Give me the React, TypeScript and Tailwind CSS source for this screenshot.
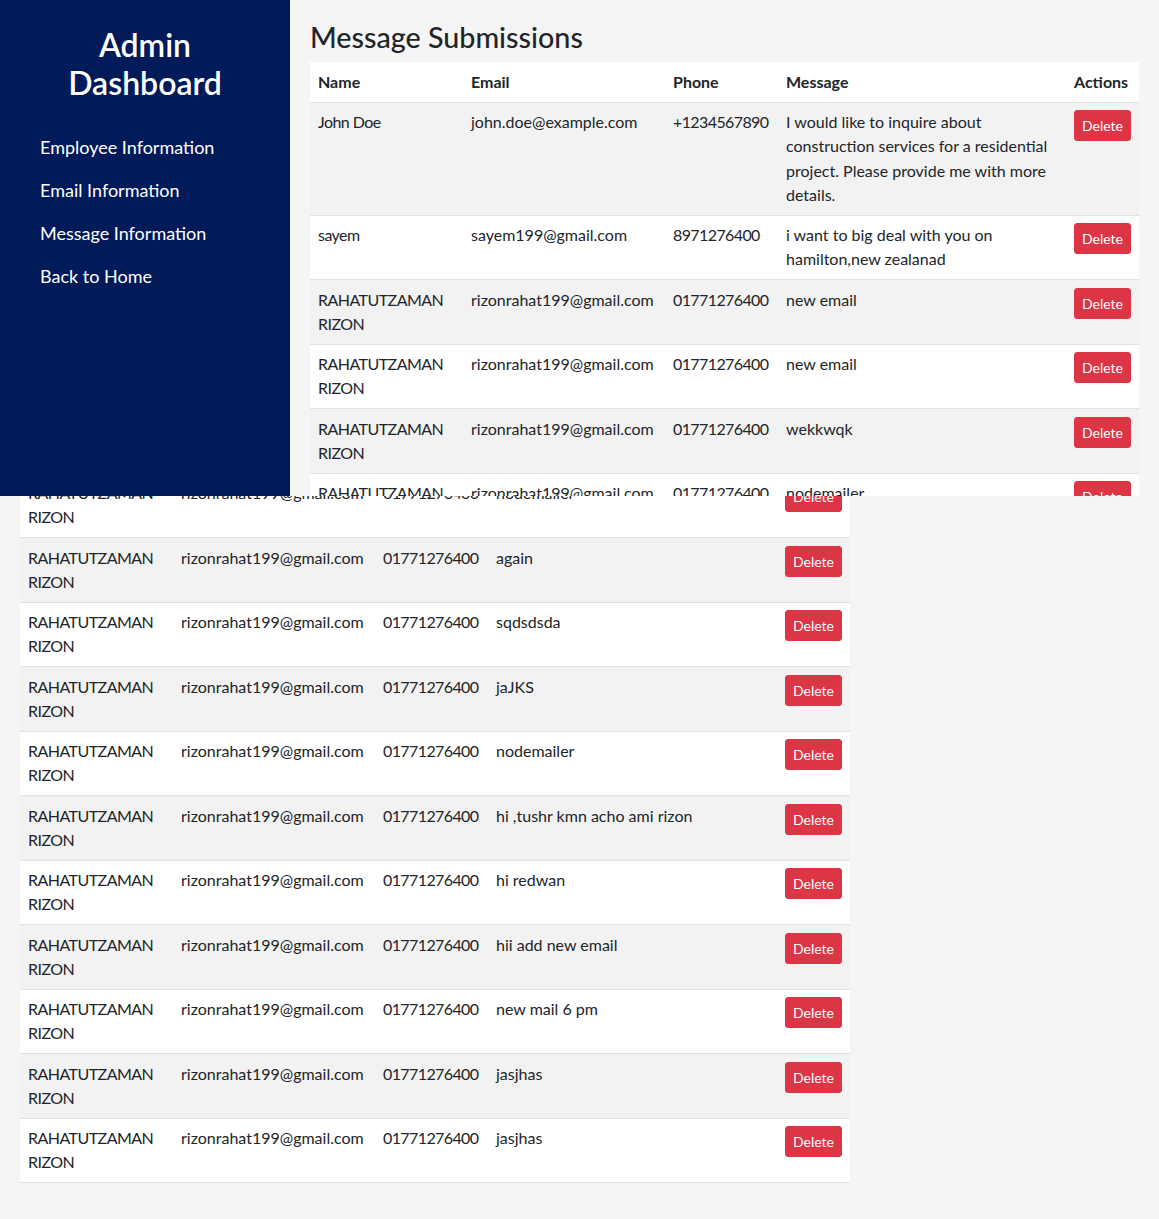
import React from "react";

type Row = { name: string; email: string; phone: string; message: string };

const R = "RAHATUTZAMAN RIZON";
const E = "rizonrahat199@gmail.com";
const P = "01771276400";

const rows: Row[] = [
  {
    name: "John Doe",
    email: "john.doe@example.com",
    phone: "+1234567890",
    message:
      "I would like to inquire about construction services for a residential project. Please provide me with more details.",
  },
  { name: "sayem", email: "sayem199@gmail.com", phone: "8971276400", message: "i want to big deal with you on hamilton,new zealanad" },
  { name: R, email: E, phone: P, message: "new email" },
  { name: R, email: E, phone: P, message: "new email" },
  { name: R, email: E, phone: P, message: "wekkwqk" },
  { name: R, email: E, phone: P, message: "nodemailer" },
  { name: R, email: E, phone: P, message: "again" },
  { name: R, email: E, phone: P, message: "sqdsdsda" },
  { name: R, email: E, phone: P, message: "jaJKS" },
  { name: R, email: E, phone: P, message: "nodemailer" },
  { name: R, email: E, phone: P, message: "hi ,tushr kmn acho ami rizon" },
  { name: R, email: E, phone: P, message: "hi redwan" },
  { name: R, email: E, phone: P, message: "hii add new email" },
  { name: R, email: E, phone: P, message: "new mail 6 pm" },
  { name: R, email: E, phone: P, message: "jasjhas" },
  { name: R, email: E, phone: P, message: "jasjhas" },
];

function MainContent() {
  return (
    <div className="p-5">
      <h2 className="mb-2 text-[28.7px] font-medium leading-[1.2] text-[#212529]">Message Submissions</h2>
      <table className="mb-4 w-full table-fixed border-collapse bg-white text-[16px] leading-[24.25px] text-[#212529]">
        <colgroup>
          <col className="w-[153px]" />
          <col className="w-[202px]" />
          <col className="w-[113px]" />
          <col />
          <col className="w-[73px]" />
        </colgroup>
        <thead>
          <tr>
            <th className="px-2 py-[7.5px] text-left font-bold">Name</th>
            <th className="px-2 py-[7.5px] text-left font-bold">Email</th>
            <th className="px-2 py-[7.5px] text-left font-bold">Phone</th>
            <th className="px-2 py-[7.5px] text-left font-bold">Message</th>
            <th className="px-2 py-[7.5px] text-left font-bold">Actions</th>
          </tr>
        </thead>
        <tbody>
          {rows.map((r, i) => (
            <tr
              key={i}
              className={
                "border-t border-[#dee2e6] align-top last:border-b " + (i % 2 === 0 ? "bg-[#f2f2f2]" : "bg-white")
              }
            >
              <td className="px-2 py-[7.5px] tracking-[-0.55px]">{r.name}</td>
              <td className="px-2 py-[7.5px]">{r.email}</td>
              <td className="whitespace-nowrap px-2 py-[7.5px] tracking-[-0.6px]">{r.phone}</td>
              <td className="px-2 py-[7.5px]">{r.message}</td>
              <td className="px-2 py-[7.5px]">
                <button className="rounded-[3px] border border-[#dc3545] bg-[#dc3545] px-[7px] py-1 text-[14px] leading-[21px] text-white">
                  Delete
                </button>
              </td>
            </tr>
          ))}
        </tbody>
      </table>
    </div>
  );
}

const links = ["Employee Information", "Email Information", "Message Information", "Back to Home"];

export default function App() {
  return (
    <div className="relative min-h-[1219px] bg-[#f5f5f5] font-['Lato',sans-serif]">
      {/* page content below the viewport capture */}
      <div className="w-[870px]">
        <MainContent />
      </div>

      {/* viewport capture laid over the page */}
      <div className="absolute inset-x-0 top-0 flex h-[496px] overflow-hidden bg-[#f5f5f5]">
        <aside className="w-[290px] shrink-0 bg-[#011a5a] px-5 pt-[26px] text-white">
          <h2 className="text-center text-[32px] font-semibold leading-[38.4px]">
            Admin
            <br />
            Dashboard
          </h2>
          <ul className="mt-[23px]">
            {links.map((l) => (
              <li key={l} className="px-5 py-2 text-[18px] leading-[27px]">
                <a href="#" className="text-white">
                  {l}
                </a>
              </li>
            ))}
          </ul>
        </aside>
        <div className="min-w-0 flex-1">
          <MainContent />
        </div>
      </div>
    </div>
  );
}
